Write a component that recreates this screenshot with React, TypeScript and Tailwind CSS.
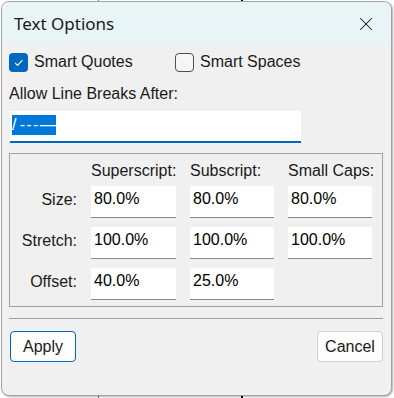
import { X } from 'lucide-react';

const sans = "font-['Liberation_Sans',Arial,sans-serif]";

function Field({ value }: { value: string }) {
  return (
    <div className="h-[32px] bg-white border-b border-[#8a8a8a] pl-[3px] pt-[4px] text-[16px] leading-[18px] text-black">
      {value}
    </div>
  );
}

function RowLabel({ text }: { text: string }) {
  return <div className="h-[32px] pt-[5px] text-right text-[16px] leading-[18px] text-[#1a1a1a]">{text}</div>;
}

export default function App() {
  const rows = [
    { label: 'Size:', values: ['80.0%', '80.0%', '80.0%'] },
    { label: 'Stretch:', values: ['100.0%', '100.0%', '100.0%'] },
    { label: 'Offset:', values: ['40.0%', '25.0%'] },
  ];

  return (
    <div className="relative w-[394px] h-[398px] bg-white pt-[1px] pl-[1px]">
      {/* bits of the page behind the dialog */}
      <div className="absolute left-[98px] top-0 w-px h-[2px] bg-[#777]" />
      <div className="absolute left-[241px] top-0 w-[2px] h-[3px] bg-black" />
      <div className="absolute left-[98px] bottom-0 w-px h-[2px] bg-[#777]" />
      <div className="absolute left-[241px] bottom-0 w-[2px] h-[3px] bg-black" />

      <div className="relative w-[391px] h-[395px] rounded-[8px] border border-[#a3a3a3] bg-[#f0f0f0] overflow-hidden flex flex-col shadow-[1px_1px_2px_rgba(0,0,0,0.3)]">
        <div className="h-[43px] shrink-0 bg-[#e9f4f7] flex items-center justify-between pl-[12px] pr-[14px]">
          <span className="font-['Segoe_UI','Noto_Sans',sans-serif] text-[17px] text-[#1a1a1a]">Text Options</span>
          <X size={22} strokeWidth={1.1} className="text-[#1a1a1a]" />
        </div>

        <div className={`flex flex-col pl-[7px] pr-[8px] pt-[7px] ${sans} text-[#1a1a1a]`}>
          <div className="flex items-center h-[20px]">
            <div className="flex items-center gap-[6px] w-[166px]">
              <span className="w-[19px] h-[19px] rounded-[4px] bg-[#0067c0] flex items-center justify-center">
                <svg width="19" height="19" viewBox="0 0 19 19">
                  <path d="M6 9.8l2.6 2.6L13.4 7.2" fill="none" stroke="white" strokeWidth="1.1" />
                </svg>
              </span>
              <span className="text-[16px] leading-[18px]">Smart Quotes</span>
            </div>
            <div className="flex items-center gap-[6px]">
              <span className="w-[19px] h-[19px] rounded-[4px] border border-[#4f4f4f] bg-[#f6f6f6]" />
              <span className="text-[16px] leading-[18px]">Smart Spaces</span>
            </div>
          </div>

          <div className="mt-[13px] text-[16px] leading-[18px]">Allow Line Breaks After:</div>

          <div className="mt-[8px] ml-[1px] w-[291px] h-[32px] bg-white border-b-2 border-[#0067c0] pl-[2px] pt-[2px]">
            <span className="inline-block bg-[#0078d7] text-white text-[16px] leading-[20px] whitespace-pre">
              {'/\u2009-\u200a-\u200a-\u200a—'}
            </span>
          </div>

          <div className="mt-[10px] h-[154px] border border-[#a0a0a0] pt-[8px]">
            <div className="grid grid-cols-[67px_85px_84px_84px] gap-x-[14px] gap-y-[9px]">
              <div />
              <div className="text-[16px] leading-[18px] whitespace-nowrap -mb-[3px]">Superscript:</div>
              <div className="text-[16px] leading-[18px] whitespace-nowrap -mb-[3px]">Subscript:</div>
              <div className="text-[16px] leading-[18px] whitespace-nowrap -mb-[3px]">Small Caps:</div>
              {rows.map((row) => (
                <>
                  <RowLabel key={row.label} text={row.label} />
                  {[0, 1, 2].map((i) =>
                    row.values[i] ? <Field key={row.label + i} value={row.values[i]} /> : <div key={row.label + i} />
                  )}
                </>
              ))}
            </div>
          </div>

          <div className="mt-[11px] h-px bg-[#a0a0a0]" />

          <div className="mt-[12px] flex justify-between">
            <button className="ml-[1px] w-[66px] h-[31px] rounded-[4px] border border-[#0067c0] bg-[#fdfdfd] text-[16px] text-[#1a1a1a]">
              Apply
            </button>
            <button className="w-[66px] h-[31px] rounded-[4px] border border-[#d0d0d0] bg-[#fdfdfd] text-[16px] text-[#1a1a1a]">
              Cancel
            </button>
          </div>
        </div>
      </div>
    </div>
  );
}
